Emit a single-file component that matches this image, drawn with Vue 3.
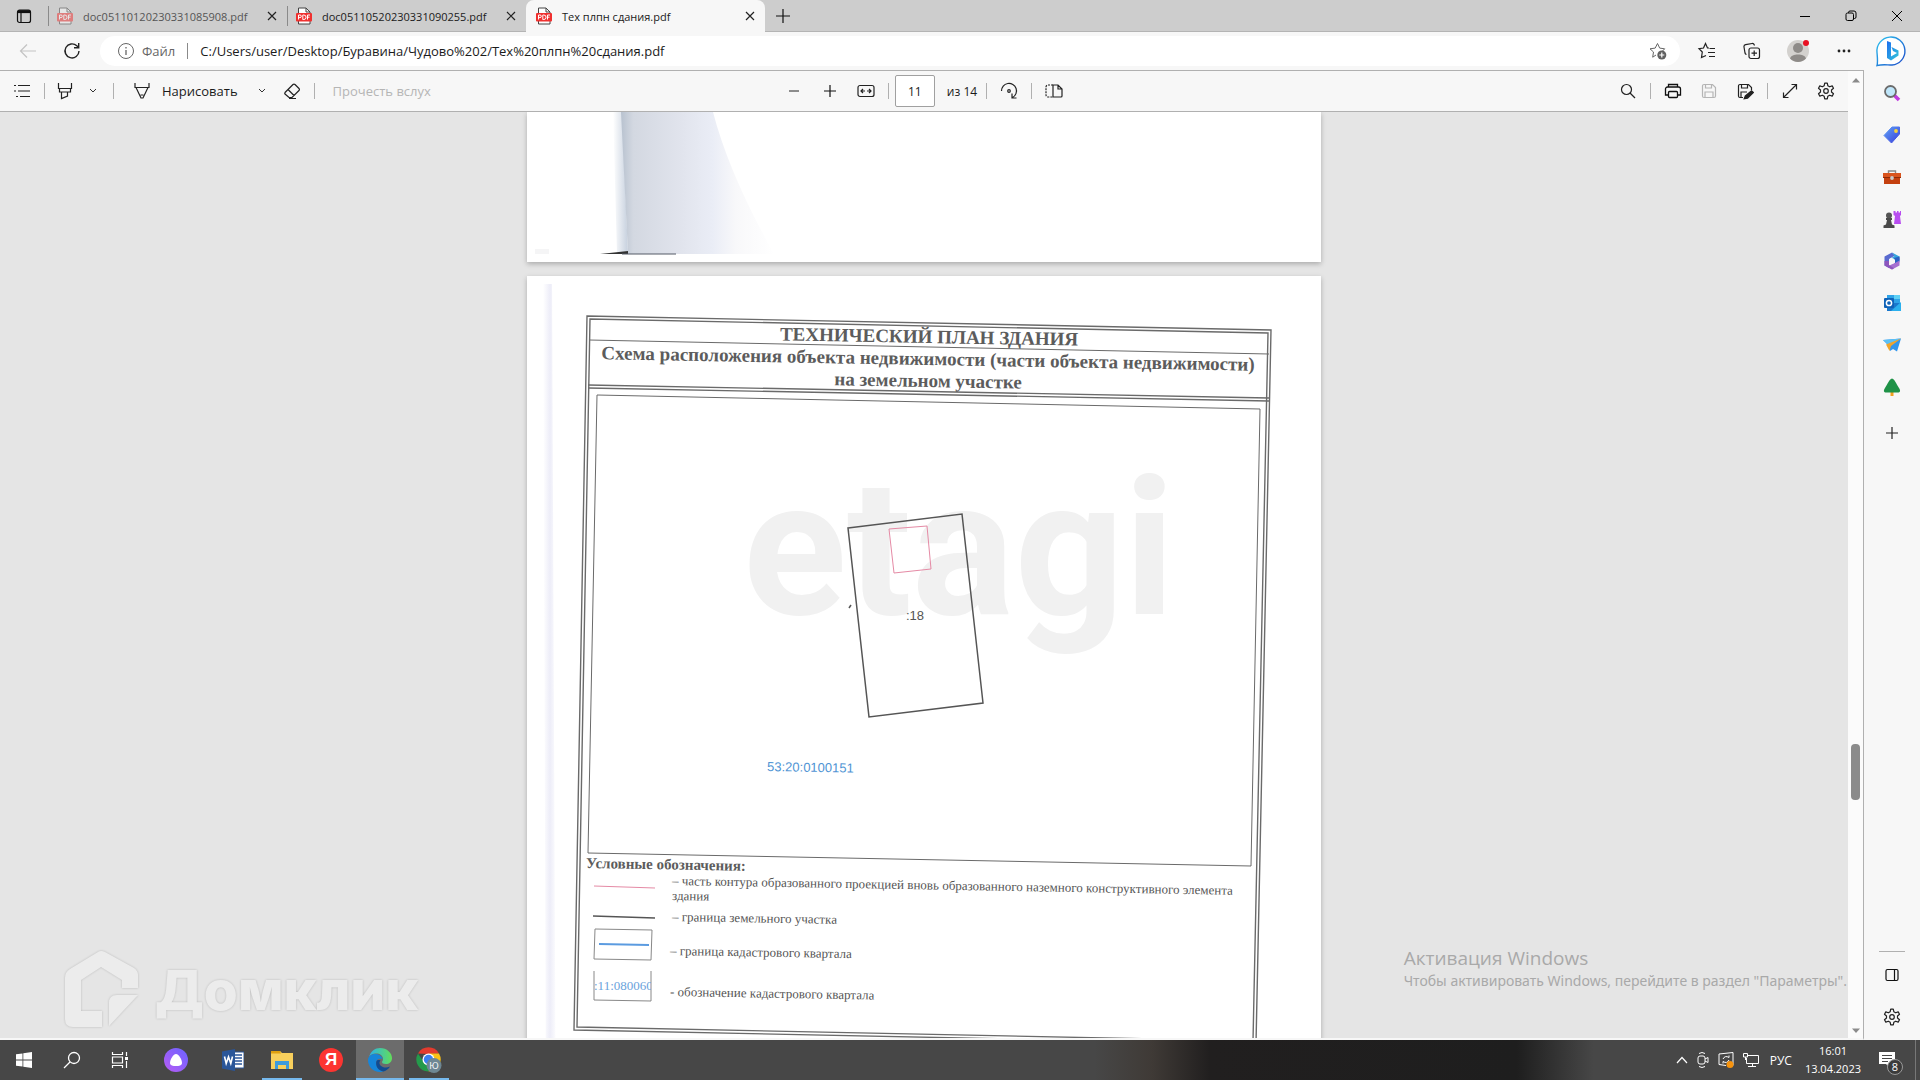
<template>
  <div class="desktop">
    <!-- tab strip -->
    <header class="tab-strip">
      <button class="tab-actions" aria-label="Меню действий вкладок">
        <svg width="16" height="16" viewBox="0 0 16 16" fill="none" stroke="#111">
          <rect x="1.5" y="2" width="13" height="12.5" rx="2" stroke-width="1.2" />
          <path d="M2 3.6h12" stroke-width="3" />
          <path d="M5 4v10" stroke-width="1.2" />
        </svg>
      </button>
      <div
        v-for="tab in tabs"
        :key="tab.title"
        class="tab"
        :class="{ active: tab.active, faded: tab.faded }"
      >
        <svg class="pdf-icon" width="16" height="18" viewBox="0 0 16 18">
          <path d="M2.5 1h7.5l4 4v12H2.500z" fill="#fff" stroke="#444" />
          <path d="M10 1v4h4" fill="none" stroke="#444" />
          <rect x="0" y="6" width="16" height="8.500" rx="1" fill="#f0302f" />
          <path
            d="M2.500 12.500v-4.500h1.500a1.300 1.300 0 0 1 0 2.600H2.500M6.800 8v4.500h1a2.200 2.200 0 0 0 0-4.500zM11.500 12.500V8H14M11.500 10.200h2"
            fill="none" stroke="#fff"
          />
        </svg>
        <span class="tab-title">{{ tab.title }}</span>
        <button class="tab-close" aria-label="Закрыть вкладку">
          <svg width="10" height="10" viewBox="0 0 10 10" stroke="#222" stroke-width="1.2"><path d="M1 1l8 8M9 1l-8 8" /></svg>
        </button>
      </div>
      <button class="new-tab" aria-label="Новая вкладка">
        <svg width="14" height="14" viewBox="0 0 14 14" stroke="#111" stroke-width="1.2"><path d="M7 0v14M0 7h14" /></svg>
      </button>
      <div class="window-controls">
        <button aria-label="Свернуть">
          <svg width="12" height="12" viewBox="0 0 12 12" stroke="#000"><path d="M1 6.500h10" /></svg>
        </button>
        <button aria-label="Восстановить">
          <svg width="12" height="12" viewBox="0 0 12 12" fill="none" stroke="#000">
            <rect x="1" y="3" width="7.500" height="7.500" rx="1.500" />
            <path d="M3.500 3V2.500A1.500 1.500 0 0 1 5 1h4a2 2 0 0 1 2 2v4a1.500 1.500 0 0 1-1.500 1.500H9" />
          </svg>
        </button>
        <button aria-label="Закрыть">
          <svg width="12" height="12" viewBox="0 0 12 12" stroke="#000"><path d="M1 1l10 10M11 1L1 11" /></svg>
        </button>
      </div>
    </header>

    <!-- address row -->
    <div class="address-row">
      <button class="nav-btn" disabled aria-label="Назад">
        <svg width="18" height="16" viewBox="0 0 18 16" fill="none" stroke="#c3c3c3" stroke-width="1.2"><path d="M17 8H2M8 1.500L1.500 8 8 14.500" /></svg>
      </button>
      <button class="nav-btn" aria-label="Обновить">
        <svg width="18" height="18" viewBox="0 0 18 18" fill="none" stroke="#222" stroke-width="1.4">
          <path d="M16 9a7 7 0 1 1-2.200-5.200L15.500 5.500" />
          <path d="M15.700 1v4.700H11" />
        </svg>
      </button>
      <div class="address-bar">
        <svg width="18" height="18" viewBox="0 0 18 18" fill="none" stroke="#666">
          <circle cx="9" cy="9" r="7.500" />
          <path d="M9 8v5M9 5v1.500" stroke-width="1.300" />
        </svg>
        <span class="scheme">Файл</span>
        <input class="url" type="text" aria-label="Адресная строка" :value="url" />
        <button class="add-favorite" aria-label="Добавить в избранное">
          <svg width="18" height="18" viewBox="0 0 18 18" fill="none" stroke="#666">
            <path d="M8.500 1.500l2.200 4.600 5 .7-2.500 2.500M7 13l-3.300 2.200.8-5.200L1 6.800l5.200-.7 2.300-4.600" />
            <circle cx="12.800" cy="13" r="4.500" fill="#616161" stroke="none" />
            <path d="M12.800 10.500v5M10.300 13h5" stroke="#fff" stroke-width="1.200" />
          </svg>
        </button>
      </div>
      <div class="browser-actions">
        <button aria-label="Избранное">
          <svg width="18" height="18" viewBox="-1 0 18 18" fill="none" stroke="#222" stroke-width="1.200">
            <path d="M11 6H9.500L7.500 1.500 5.500 6l-4.500.7 3.300 3.300-.8 5.500L8 13.500M11.500 6.500H17M10 10.500h7M11 14.500h6" />
          </svg>
        </button>
        <button aria-label="Коллекции">
          <svg width="18" height="18" viewBox="0 0 18 18" fill="none" stroke="#222" stroke-width="1.200">
            <rect x="6" y="6" width="10.500" height="10.500" rx="2" />
            <path d="M11.200 8.500v5.500M8.500 11.200h5.500M3.500 12.500A2 2 0 0 1 2 11L1 5a2 2 0 0 1 1.600-2.300l6.500-1.200A2 2 0 0 1 11.400 3.500" />
          </svg>
        </button>
        <button aria-label="Профиль">
          <svg width="26" height="26" viewBox="0 0 26 26">
            <circle cx="13" cy="13" r="11" fill="#d3d1ce" />
            <circle cx="13" cy="10" r="5" fill="#8e8b88" />
            <path d="M5 20.500C6 17.500 9 16.500 13 16.500s7 1 8 4A11 11 0 0 1 5 20.500z" fill="#8e8b88" />
            <circle cx="21" cy="5" r="3" fill="#e81123" />
          </svg>
        </button>
        <button aria-label="Настройки и прочее">
          <svg width="14" height="4" viewBox="0 0 14 4" fill="#222"><circle cx="2" cy="2" r="1.400" /><circle cx="7" cy="2" r="1.400" /><circle cx="12" cy="2" r="1.400" /></svg>
        </button>
        <button aria-label="Bing">
          <svg width="34" height="32" viewBox="-2 0 34 32">
            <defs>
              <linearGradient id="bing-ring" x1="0" y1="0" x2="1" y2="1"><stop offset="0" stop-color="#2cc4f0" /><stop offset="1" stop-color="#1b49c8" /></linearGradient>
              <linearGradient id="bing-b" x1="0" y1="0" x2="1" y2="1"><stop offset="0" stop-color="#1b6df0" /><stop offset="1" stop-color="#35c8d8" /></linearGradient>
            </defs>
            <path d="M2 30.500c1-3 .5-7 0-13A14 14 0 1 1 17 30c-5 0-9-1-15 .5z" fill="#fff" stroke="url(#bing-ring)" stroke-width="1.400" />
            <path d="M12 6l4 1.500v14L22 18l-4-2-1.500-4 7 3.500v5L16 25.500 12 23z" fill="url(#bing-b)" />
          </svg>
        </button>
      </div>
    </div>

    <div class="content">
      <main class="viewer">
        <div class="viewer-main">
          <!-- pdf toolbar -->
          <div class="pdf-toolbar">
            <div class="group">
              <button class="tool" aria-label="Содержание">
                <svg width="18" height="16" viewBox="0 0 18 16" stroke="#222" stroke-width="1.200"><path d="M5 2.500h12M5 8h12M7 13.500h10M1 2.500h2M1 8h2M3 13.500h2" /></svg>
              </button>
              <span class="sep"></span>
              <button class="tool narrow" aria-label="Выделить">
                <svg width="16" height="18" viewBox="0 0 16 18" fill="none" stroke="#222" stroke-width="1.200"><path d="M1.500 1v5.500h13V1M2.500 6.500v3.500h11V6.500M4.500 10v6.500l6-2.500v-4" /></svg>
              </button>
              <button class="tool chevron first" aria-label="Цвет выделения">
                <svg width="8" height="6" viewBox="0 0 8 6" fill="none" stroke="#333"><path d="M1 1l3 3 3-3" /></svg>
              </button>
              <span class="sep"></span>
              <button class="draw">
                <svg width="16" height="18" viewBox="0 0 16 18" fill="none" stroke="#222" stroke-width="1.200"><path d="M1 1v4.500h14V1M2 5.500l5 10.500h2l5-10.500M6.500 13h3" /></svg>
                Нарисовать
              </button>
              <button class="tool chevron" aria-label="Параметры рукописного ввода">
                <svg width="8" height="6" viewBox="0 0 8 6" fill="none" stroke="#333"><path d="M1 1l3 3 3-3" /></svg>
              </button>
              <button class="tool" aria-label="Стереть">
                <svg width="18" height="18" viewBox="0 0 18 18" fill="none" stroke="#222" stroke-width="1.200"><path d="M2 10.500l8-8a1.400 1.400 0 0 1 2 0l4 4a1.400 1.400 0 0 1 0 2l-7 7H6l-4-3.500a1.200 1.200 0 0 1 0-1.500zM5 7.500l6 6M6 16.500h7" /></svg>
              </button>
              <span class="sep"></span>
              <button class="read-aloud" disabled>Прочесть вслух</button>
            </div>
            <div class="group">
              <button class="tool" aria-label="Уменьшить">
                <svg width="12" height="12" viewBox="0 0 12 12" stroke="#222"><path d="M1 6h10" /></svg>
              </button>
              <button class="tool" aria-label="Увеличить">
                <svg width="12" height="12" viewBox="0 0 12 12" stroke="#111" stroke-width="1.200"><path d="M6 0v12M0 6h12" /></svg>
              </button>
              <button class="tool" aria-label="По ширине">
                <svg width="18" height="14" viewBox="0 0 18 14" fill="none" stroke="#222" stroke-width="1.200"><rect x="1" y="1.500" width="16" height="11" rx="2" /><path d="M4 7h4M10 7h4M6 5L4 7l2 2M12 5l2 2-2 2" /></svg>
              </button>
              <span class="sep"></span>
              <input class="page-input" type="text" aria-label="Номер страницы" v-model="page" />
              <span class="page-total">из 14</span>
              <span class="sep"></span>
              <button class="tool" aria-label="Повернуть">
                <svg width="18" height="18" viewBox="0 0 18 18" fill="none" stroke="#222" stroke-width="1.200"><path d="M1.500 9a7.500 7.500 0 1 1 11 6.500M12 11.500v4.500h4.500" /><circle cx="9" cy="9" r="1.300" /></svg>
              </button>
              <span class="sep"></span>
              <button class="tool" aria-label="Представление страницы">
                <svg width="18" height="16" viewBox="0 0 18 16" fill="none" stroke="#222" stroke-width="1.200"><path d="M8 2h5l4 4v7a1 1 0 0 1-1 1H8zM13 2v4h4" /><path d="M8 2H3a2 2 0 0 0-2 2v8a2 2 0 0 0 2 2h5" stroke-dasharray="2 1" /></svg>
              </button>
            </div>
            <div class="group end">
              <button class="tool" aria-label="Найти">
                <svg width="16" height="16" viewBox="0 0 16 16" fill="none" stroke="#222" stroke-width="1.200"><circle cx="6.500" cy="6.500" r="5" /><path d="M10 10l5 5" /></svg>
              </button>
              <span class="sep"></span>
              <button class="tool" aria-label="Печать">
                <svg width="18" height="16" viewBox="0 0 18 16" fill="none" stroke="#111" stroke-width="1.300"><path d="M4.500 4V1.500h9V4M4.500 12H1.500V6a2 2 0 0 1 2-2h11a2 2 0 0 1 2 2v6h-3" /><rect x="4.500" y="8.500" width="9" height="6" rx="1" /></svg>
              </button>
              <button class="tool" disabled aria-label="Сохранить">
                <svg width="16" height="16" viewBox="0 0 16 16" fill="none" stroke="#b5b5b5" stroke-width="1.200"><path d="M3 1.500h8.500l3 3V13a1.500 1.500 0 0 1-1.500 1.500H3A1.500 1.500 0 0 1 1.500 13V3A1.500 1.500 0 0 1 3 1.500zM4.500 1.500V5h6V1.500M4 14.500V9h8v5.500" /></svg>
              </button>
              <button class="tool" aria-label="Сохранить как">
                <svg width="17" height="17" viewBox="0 0 17 17" fill="none" stroke="#222" stroke-width="1.200"><path d="M6 14.500H3A1.500 1.500 0 0 1 1.500 13V3A1.500 1.500 0 0 1 3 1.500h8.500l3 3V7M4.500 1.500V5h6V1.500M4 14.500V9h6" /><path d="M7.500 15.500l1-2.500 6-5 1.500 1.500-5.500 5.500z" fill="#222" stroke-width="1.600" /></svg>
              </button>
              <span class="sep"></span>
              <button class="tool" aria-label="Во весь экран">
                <svg width="16" height="16" viewBox="0 0 16 16" fill="none" stroke="#222" stroke-width="1.200"><path d="M1.500 14.500l13-13M9.500 1.500h5v5M1.500 9.500v5h5" /></svg>
              </button>
              <button class="tool" aria-label="Параметры">
                <svg width="18" height="18" viewBox="0 0 18 18" fill="none" stroke="#222" stroke-width="1.200"><path :d="gearPath" stroke-linejoin="round" /><circle cx="9" cy="9" r="2.300" /></svg>
              </button>
            </div>
          </div>

          <!-- pages -->
          <div class="pages">
            <section class="sheet previous">
              <svg width="100%" viewBox="0 0 794 150" role="img" aria-label="Страница 10">
                <defs>
                  <linearGradient id="fold" x1="0" x2="1">
                    <stop offset="0" stop-color="#b8c2cf" />
                    <stop offset="0.08" stop-color="#d3d8e1" />
                    <stop offset="0.35" stop-color="#dfe2eb" />
                    <stop offset="0.6" stop-color="#eaedf6" />
                    <stop offset="0.75" stop-color="#f8f8fa" />
                    <stop offset="1" stop-color="#fff" />
                  </linearGradient>
                  <linearGradient id="fold-edge" x1="0" x2="1">
                    <stop offset="0" stop-color="#fff" />
                    <stop offset="1" stop-color="#c6d0de" />
                  </linearGradient>
                </defs>
                <path d="M86 0h9l6 142H90z" fill="url(#fold-edge)" />
                <path d="M94 0h92q16 62 61 142H101z" fill="url(#fold)" />
                <path d="M73 142l28-3v3z" fill="#333" />
                <path d="M95 142h54" stroke="#555b66" />
                <path d="M8 137h14v5H8z" fill="#f5f5f6" />
              </svg>
            </section>

            <section class="sheet current">
              <svg width="100%" viewBox="0 0 794 1122" role="img" aria-label="Страница 11">
                <defs>
                  <clipPath id="quarter-label"><path d="M68 694h56v31H68z" /></clipPath>
                  <linearGradient id="scan-edge" x1="0" x2="1">
                    <stop offset="0" stop-color="#fff" />
                    <stop offset="0.5" stop-color="#ededf8" />
                    <stop offset="1" stop-color="#fff" />
                  </linearGradient>
                </defs>
                <path d="M16 8h9l5 1100H20z" fill="url(#scan-edge)" />

                <text class="watermark" x="216" y="338">etagi</text>

                <!-- frame -->
                <g class="frame">
                  <path d="M60 40L744 54 729 768 47 754z" />
                  <path d="M63 43L741 57 726 765 50 751z" />
                  <path d="M61 109L742 122M61 112L742 125" />
                  <path class="thin" d="M62 64L742 78M70 119L733 133 724 590 61 577z" />
                </g>
                <g class="heading">
                  <text x="402" y="67" transform="rotate(1 402 67)">ТЕХНИЧЕСКИЙ ПЛАН ЗДАНИЯ</text>
                  <text x="401" y="89" transform="rotate(1 401 89)">Схема расположения объекта недвижимости (части объекта недвижимости)</text>
                  <text x="401" y="111" transform="rotate(1 401 111)">на земельном участке</text>
                </g>

                <!-- plot -->
                <path class="plot" d="M321 252L435 238 456 427 342 441z" />
                <path class="building" d="M362 253L400 250 404 293 367 297z" />
                <path class="plot" d="M322 332l2-3" />
                <text class="plot-number" x="379" y="344">:18</text>
                <text class="quarter-number" x="240" y="495" transform="rotate(1 240 495)">53:20:0100151</text>

                <!-- legend -->
                <text class="legend-title" x="59" y="592" transform="rotate(1 59 592)">Условные обозначения:</text>
                <path class="building" d="M67 610L128 612" />
                <path class="plot" d="M66 640L128 642" />
                <path class="box" d="M68 653L125 654 124 684 67 683z" />
                <path class="quarter" d="M72 668L122 669" />
                <path class="box" d="M67 695V724L124 725V695" />
                <text class="quarter-sample" x="67" y="714" clip-path="url(#quarter-label)">:11:080060</text>
                <text
                  v-for="item in legend"
                  :key="item.text"
                  class="legend-text"
                  :x="item.x"
                  :y="item.y"
                  :transform="`rotate(1 ${item.x} ${item.y})`"
                >{{ item.text }}</text>
              </svg>
            </section>
          </div>

          <div class="domclick">
            <svg width="74" height="77" viewBox="0 0 74 77" fill="#ececec">
              <path d="M33 1L5 18Q0 21 0 27V68Q0 76 8 76H37V60H16V29L36 16 57 29V37H73V24Q73 20 69 17L40 1Q36 -1 33 1Z" />
              <path d="M44 75V52Q44 44 52 44H73Z" />
            </svg>
            <span>Домклик</span>
          </div>

          <div class="activation">
            <p class="activation-title">Активация Windows</p>
            <p class="activation-text">Чтобы активировать Windows, перейдите в раздел "Параметры".</p>
          </div>
        </div>

        <div class="scrollbar">
          <svg width="10" height="6" viewBox="0 0 10 6" fill="#8b8b8b"><path d="M1 5.500L5 1l4 4.500z" /></svg>
          <div class="track"><div class="thumb"></div></div>
          <svg width="10" height="6" viewBox="0 0 10 6" fill="#8b8b8b"><path d="M1 .5L5 5 9 .5z" /></svg>
        </div>
      </main>

      <!-- sidebar -->
      <aside class="sidebar">
        <button aria-label="Поиск">
          <svg width="18" height="18" viewBox="0 0 18 18"><path d="M11.500 11.500l4.500 4.500" stroke="#c03be0" stroke-width="3.500" /><circle cx="7.500" cy="7.500" r="5.500" fill="#bfe6fa" stroke="#6b6b6b" stroke-width="1.800" /></svg>
        </button>
        <button aria-label="Покупки">
          <svg width="18" height="18" viewBox="0 0 18 18"><defs><linearGradient id="tag" x1="0" y1="0" x2="1" y2="1"><stop offset="0" stop-color="#5ea3f5" /><stop offset="1" stop-color="#3c3fdc" /></linearGradient></defs><path d="M9 1h7.500v7L8.500 17 1 9.500z" fill="url(#tag)" stroke="url(#tag)" stroke-linejoin="round" /><circle cx="13" cy="5" r="1.900" fill="#f6d33c" /></svg>
        </button>
        <button aria-label="Инструменты">
          <svg width="18" height="16" viewBox="0 0 18 16"><path d="M5.500 4.500V2h7v2.500" fill="none" stroke="#888" stroke-width="1.400" /><path d="M0 4h18v5H0z" fill="#d9541e" /><path d="M1 9h16v6H1z" fill="#c4400f" /><path d="M0 8.500h18" stroke="#8e2a08" /><circle cx="9" cy="9" r="1.900" fill="#c9c9c9" /></svg>
        </button>
        <button aria-label="Игры">
          <svg width="18" height="18" viewBox="0 0 18 18"><path d="M10.500 1h2v1.500h1.500V1h1.500v1.500H17V1h1v4l-1 1 1 8h-7l1-8-1.500-1z" fill="#b84df0" /><circle cx="6" cy="5.500" r="3" fill="#555" /><path d="M3 8h6v2H8l1 4.500 2.500 1V18H.5v-2.500l2.500-1L4 10H3z" fill="#4a4a4a" /></svg>
        </button>
        <button aria-label="Microsoft 365">
          <svg width="18" height="18" viewBox="0 0 18 18"><path d="M9 .5L1.500 4.500v9L6 16V7l6-3.500z" fill="#5a6bd0" /><path d="M9 .5l7.500 4v6L12 8 8.500 6l3-2z" fill="#36a5dc" /><path d="M16.500 6v7.500L9 17.500l-5-2.700 8-4V8.500z" fill="#a66fd0" /><path d="M16.500 4.500v4L12 11V8l-1-2z" fill="#2a62c4" /><path d="M1.500 9v4.500L9 17.500l2-1.200L6 13V9z" fill="#8e56bd" /><circle cx="9" cy="9" r="2.800" fill="#f7f7f7" /></svg>
        </button>
        <button aria-label="Outlook">
          <svg width="18" height="18" viewBox="0 0 18 18"><path d="M4 1h13v8H4z" fill="#2fa3e8" /><path d="M11 1h6v4h-6z" fill="#5fd0f5" /><path d="M4 9h14v8H4z" fill="#1a78cc" /><path d="M18 8v9H8z" fill="#2bb0ee" /><rect x="1" y="4" width="10" height="10" rx="1" fill="#0f62b8" /><circle cx="6" cy="9" r="2.600" fill="none" stroke="#fff" stroke-width="1.500" /></svg>
        </button>
        <button aria-label="Drop">
          <svg width="18" height="16" viewBox="0 0 18 16"><path d="M0 3l18-1.500L14 14.500 10 12l-3 2-1-5z" fill="#3196ee" /><path d="M0 3l18-1.500L5 7.500z" fill="#5cc1f6" /><path d="M3 7.500L18 1.500 8 9l-1.500 5z" fill="#f0a52c" /></svg>
        </button>
        <button aria-label="E-tree">
          <svg width="18" height="18" viewBox="0 0 18 18"><path d="M7.500 13h3v5h-3z" fill="#f0a020" /><path d="M9 .5c3 1 4 5 7 9.500 2 3 1 4.500-1 4.500H3c-2 0-3-1.500-1-4.500C5 5.500 6 1.500 9 .5z" fill="#1f9247" /></svg>
        </button>
        <button class="add" aria-label="Настроить">
          <svg width="12" height="12" viewBox="0 0 12 12" stroke="#222" stroke-width="1.200"><path d="M6 0v12M0 6h12" /></svg>
        </button>
        <div class="sidebar-bottom">
          <button aria-label="Скрыть боковую панель">
            <svg width="14" height="14" viewBox="0 0 14 14" fill="none" stroke="#111" stroke-width="1.200"><rect x="1" y="1.500" width="12" height="11" rx="1.500" /><path d="M9.500 1.500v11" /></svg>
          </button>
          <button aria-label="Настройки">
            <svg width="18" height="18" viewBox="0 0 18 18" fill="none" stroke="#222" stroke-width="1.200"><path :d="gearPath" stroke-linejoin="round" /><circle cx="9" cy="9" r="2.300" /></svg>
          </button>
        </div>
      </aside>
    </div>

    <!-- taskbar -->
    <footer class="taskbar">
      <button aria-label="Пуск">
        <svg width="16" height="16" viewBox="0 0 16 16" fill="#fff"><path d="M0 2.300L6.500 1.400v6.200H0zM7.300 1.300L16 0v7.600H7.300zM0 8.400h6.500v6.200L0 13.700zM7.300 8.400H16V16l-8.700-1.300z" /></svg>
      </button>
      <button aria-label="Поиск">
        <svg width="18" height="18" viewBox="0 0 18 18" fill="none" stroke="#fff" stroke-width="1.300"><circle cx="11" cy="7" r="5.500" /><path d="M7 11l-6 6" /></svg>
      </button>
      <button aria-label="Представление задач">
        <svg width="18" height="16" viewBox="0 0 18 16" fill="none" stroke="#fff" stroke-width="1.200"><path d="M1.500 0v2.500h10V0M1.500 16v-2.500h10V16M1.500 5h10v6h-10zM15.500 0v4M15.500 9v7" /><path d="M14 5h3v3h-3z" fill="#fff" stroke="none" /></svg>
      </button>
      <div class="apps">
        <button class="alice" aria-label="Алиса">
          <svg width="24" height="24" viewBox="0 0 24 24"><defs><linearGradient id="alice" x1="1" y1="0" x2="0" y2="1"><stop offset="0" stop-color="#6a63ff" /><stop offset="1" stop-color="#b85cf5" /></linearGradient></defs><circle cx="12" cy="12" r="12" fill="url(#alice)" /><path d="M12 6c3 0 6 6 6 9 0 2.500-3 3-6 3s-6-.5-6-3c0-3 3-9 6-9z" fill="#fff" /></svg>
        </button>
        <button aria-label="Word">
          <svg width="22" height="22" viewBox="0 0 22 22"><path d="M12 3h10v16H12z" fill="#fff" stroke="#2a569a" /><path d="M13 6h7M13 9h7M13 12h7M13 15h7" stroke="#2a569a" stroke-width="1.300" /><path d="M0 2.500L13 0v22L0 19.500z" fill="#2a5699" /><path d="M2.500 7.500l1.700 7 2.300-6.500 2.300 6.500 1.700-7" fill="none" stroke="#fff" stroke-width="1.600" /></svg>
        </button>
        <button class="running" aria-label="Проводник">
          <svg width="22" height="20" viewBox="0 0 22 20"><path d="M0 1h9l2 2h11v16H0z" fill="#f8cf5c" /><path d="M0 1h9l1 2.500H0z" fill="#e0a010" /><path d="M4 19v-8h14v8h-3v-4H7v4z" fill="#3e9bdc" /></svg>
        </button>
        <button aria-label="Яндекс">
          <span class="yandex">Я</span>
        </button>
        <button class="running focused" aria-label="Microsoft Edge">
          <svg width="24" height="24" viewBox="0 0 24 24">
            <defs><linearGradient id="edge-top" x1="0" x2="1"><stop offset="0" stop-color="#2bb1e8" /><stop offset="1" stop-color="#62de5a" /></linearGradient></defs>
            <path d="M1 9C3 3 7 0 12 0c7 0 12 5 12 10 0 4-3 6-6 6-3 0-4-1-4-2 0-1 1-1 1-3C15 7 11 5 7 5.500 4 6 2 7 1 9z" fill="url(#edge-top)" />
            <path d="M0 12c0-4 4-6.500 8-6 4 .5 6.500 3 6.500 5-1-1-5-1-6 2-1.500 5 3 10 7 10.300-1 .5-2 .7-3.500.7C5 24 0 18.500 0 12z" fill="#1685d9" />
            <path d="M8.500 13c-1.500 5 2 10 7 10.400 3-1 5-2.500 6.500-5-5 2.500-10 0-10.500-3-.3-1.500.5-2.500 1-3-2-.6-3.500-.4-4 .6z" fill="#114b91" />
          </svg>
        </button>
        <button class="running" aria-label="Google Chrome">
          <svg width="26" height="26" viewBox="0 0 26 26">
            <path d="M2 6.500A12 12 0 0 1 23 6.500L12 7z" fill="#e33b2e" />
            <path d="M23 6.500A12 12 0 0 1 12.500 24.500L17 12l-4-5.500z" fill="#fbc116" />
            <path d="M2 6.500A12 12 0 0 0 12.500 24.500L16 15 7 14z" fill="#249a4b" />
            <circle cx="12.500" cy="12.500" r="6" fill="#fff" /><circle cx="12.500" cy="12.500" r="4.700" fill="#3c7ff0" />
            <circle cx="18" cy="18.500" r="7.500" fill="#6e8794" />
            <text x="18" y="22" text-anchor="middle" class="chrome-profile">Ю</text>
          </svg>
        </button>
      </div>

      <div class="tray">
        <svg width="12" height="8" viewBox="0 0 12 8" fill="none" stroke="#fff" stroke-width="1.200"><path d="M1 7l5-5.500L11 7" /></svg>
        <svg width="12" height="18" viewBox="0 0 12 18" fill="none" stroke="#fff"><rect x="1" y="5" width="7" height="8" rx="2" /><path d="M8 8l3-1.500v5L8 10M2 2.500q3-2 6 0M2 15.500q3 2 6 0" /></svg>
        <svg width="16" height="18" viewBox="0 0 16 18" fill="none" stroke="#fff"><path d="M1 3l14-1.500v13M8 14.500L1 13.500V3M5 8q2-4 6-1.500V4.500M11 9q-2 4-6 1.500v2" /><circle cx="12" cy="13.500" r="3.500" fill="#f7930d" stroke="none" /></svg>
        <svg width="16" height="16" viewBox="0 0 16 16" fill="none" stroke="#fff"><path d="M5 3.500h10.500v8H3.500V6M9.500 11.500v3M5 14.500h8M.5 1.500h4V5h-4zM2.500 5v3" /></svg>
        <span class="lang">РУС</span>
        <div class="clock">
          <span>16:01</span>
          <span>13.04.2023</span>
        </div>
        <button class="notifications" aria-label="Уведомления">
          <svg width="16" height="18" viewBox="0 0 16 18"><path d="M0 1h16v12h-5v4l-4-4H0z" fill="#fff" /><path d="M3 4.500h10M3 7.500h10M3 10.500h6" stroke="#474747" /></svg>
          <span class="badge">8</span>
        </button>
      </div>
    </footer>
  </div>
</template>

<script setup>
import { ref } from 'vue'

const url = 'C:/Users/user/Desktop/Буравина/Чудово%202/Тех%20плпн%20сдания.pdf'
const page = ref('11')

const tabs = [
  { title: 'doc05110120230331085908.pdf', active: false, faded: true },
  { title: 'doc05110520230331090255.pdf', active: false, faded: false },
  { title: 'Тех плпн сдания.pdf', active: true, faded: false }
]

const legend = [
  { text: '– часть контура образованного проекцией вновь образованного наземного конструктивного элемента', x: 145, y: 609 },
  { text: 'здания', x: 145, y: 624 },
  { text: '– граница земельного участка', x: 145, y: 645 },
  { text: '– граница кадастрового квартала', x: 143, y: 679 },
  { text: '- обозначение кадастрового квартала', x: 143, y: 720 }
]

const gearPath = buildGear(9, 8, 5.6, 6)

// шестерёнка: зубцы чередуются с впадинами
function buildGear(center, outer, inner, teeth) {
  const points = []
  const step = (Math.PI * 2) / teeth
  for (let i = 0; i < teeth; i++) {
    const a = i * step - Math.PI / 2
    const corners = [
      [outer, a - step * 0.16],
      [outer, a + step * 0.16],
      [inner, a + step * 0.32],
      [inner, a + step * 0.68]
    ]
    for (const [r, t] of corners) {
      points.push(`${(center + r * Math.cos(t)).toFixed(1)} ${(center + r * Math.sin(t)).toFixed(1)}`)
    }
  }
  return 'M' + points.join('L') + 'Z'
}
</script>

<style>
body {
  margin: 0;
}
</style>

<style scoped>
.desktop {
  display: flex;
  flex-direction: column;
  height: 100vh;
  overflow: hidden;
  background: #f7f7f7;
  font-family: "Open Sans", "Noto Sans", sans-serif;
  font-size: 12px;
  color: #1b1b1b;
}

button {
  display: flex;
  align-items: center;
  justify-content: center;
  flex-shrink: 0;
  padding: 0;
  border: 0;
  background: none;
  font: inherit;
  color: inherit;
}

input {
  border: 0;
  padding: 0;
  font: inherit;
  color: inherit;
  background: none;
}

svg {
  flex-shrink: 0;
}

/* tabs */
.tab-strip {
  display: flex;
  height: 32px;
  background: #cdcdcd;
  box-shadow: inset 0 -1px #b4b4b4;
}

.tab-actions {
  width: 48px;
}

.tab {
  display: flex;
  align-items: center;
  box-sizing: border-box;
  width: 239px;
  padding: 0 8px;
  border-left: 1px solid #8a8a8a;
  border-image: linear-gradient(transparent 20%, #8a8a8a 20%, #8a8a8a 80%, transparent 80%) 1;
}

.tab.active {
  background: #f7f7f7;
  border: 0;
  border-radius: 8px 8px 0 0;
  padding-left: 10px;
}

.tab.faded .pdf-icon {
  opacity: 0.5;
}

.tab.faded .tab-title {
  color: #555;
}

.tab-title {
  flex: 1;
  margin-left: 10px;
  white-space: nowrap;
  font-size: 11px;
}

.tab-close {
  width: 14px;
  height: 20px;
}

.new-tab {
  width: 36px;
}

.window-controls {
  display: flex;
  margin-left: auto;
}

.window-controls button {
  width: 46px;
}

/* address row */
.address-row {
  display: flex;
  align-items: center;
  height: 38px;
  padding: 0 7px 0 10px;
}

.nav-btn {
  width: 36px;
  height: 32px;
}

.nav-btn + .nav-btn {
  margin-left: 8px;
}

.address-bar {
  display: flex;
  align-items: center;
  flex: 1;
  height: 30px;
  margin: 0 3px 0 10px;
  padding: 0 13px 0 17px;
  border-radius: 15px;
  background: #fff;
}

.scheme {
  margin-left: 7px;
  padding-right: 12px;
  border-right: 1px solid #8a8a8a;
  font-size: 13px;
  line-height: 16px;
  color: #666;
}

.url {
  flex: 1;
  margin-left: 12px;
  font-size: 13px;
}

.browser-actions {
  display: flex;
}

.browser-actions button {
  width: 46px;
}

/* viewer */
.content {
  display: flex;
  flex: 1;
  min-height: 0;
}

.viewer {
  display: flex;
  flex: 1;
  border: solid #b0b0b0;
  border-width: 1px 1px 0 0;
  border-bottom: 2px solid #f7f7f7;
}

.viewer-main {
  position: relative;
  display: flex;
  flex-direction: column;
  flex: 1;
}

.pdf-toolbar {
  display: grid;
  grid-template-columns: 1fr auto 1fr;
  height: 40px;
  border-bottom: 1px solid #b0b0b0;
  background: #f7f7f7;
  font-size: 13px;
}

.group {
  display: flex;
  align-items: center;
  padding: 0 4px;
}

.group.end {
  justify-content: flex-end;
}

.tool {
  width: 36px;
  height: 32px;
}

.tool.narrow {
  width: 32px;
}

.tool.chevron {
  width: 24px;
}

.tool.first {
  margin-right: 4px;
}

.sep {
  width: 1px;
  height: 16px;
  margin: 0 4px;
  background: #b0b0b0;
}

.draw {
  gap: 12px;
  padding: 0 12px 0 16px;
}

.read-aloud {
  margin-left: 14px;
  color: #b5b5b5;
}

.page-input {
  box-sizing: border-box;
  width: 40px;
  height: 32px;
  margin: 0 12px 0 2px;
  border: 1px solid #a0a0a0;
  border-radius: 2px;
  background: #fff;
  text-align: center;
  font-size: 12px;
}

.page-total {
  margin-right: 5px;
  font-size: 12px;
}

.pages {
  display: flex;
  flex-direction: column;
  align-items: center;
  flex: 1;
  gap: 14px;
  min-height: 0;
  overflow: hidden;
  background: #e5e5e5;
}

.sheet {
  flex-shrink: 0;
  width: 43%;
  max-width: 794px;
  background: #fff;
  box-shadow: 0 2px 5px #00000040;
}

.sheet svg {
  display: block;
}

.frame path {
  fill: none;
  stroke: #6a6a6a;
  stroke-width: 1.4;
}

.frame .thin {
  stroke-width: 1;
}

.heading text {
  font: bold 19px "Liberation Serif", serif;
  text-anchor: middle;
  fill: #5c5c5c;
}

.watermark {
  font: bold 192px Roboto, sans-serif;
  fill: #f1f1f1;
}

.plot {
  fill: none;
  stroke: #555;
  stroke-width: 1.5;
}

.building {
  fill: none;
  stroke: #e58aa5;
}

.box {
  fill: none;
  stroke: #888;
}

.quarter {
  stroke: #5b9be0;
  stroke-width: 2;
}

.plot-number {
  font: 13px "Liberation Sans", sans-serif;
  fill: #555;
}

.quarter-number {
  font: 13px "Liberation Sans", sans-serif;
  fill: #4f94d4;
}

.quarter-sample {
  font: 13px "Liberation Serif", serif;
  fill: #6aa3dc;
}

.legend-title {
  font: bold 15px "Liberation Serif", serif;
  fill: #5c5c5c;
}

.legend-text {
  font: 13px "Liberation Serif", serif;
  fill: #555;
}

.domclick {
  position: absolute;
  left: 65px;
  bottom: 10px;
  display: flex;
  align-items: center;
  gap: 16px;
  color: #ececec;
  font: 800 55px Inter, sans-serif;
  filter: drop-shadow(0 0 1px #00000030);
}

.activation {
  position: absolute;
  right: 1px;
  bottom: 47px;
  color: #a9a9a9;
  white-space: nowrap;
}

.activation p {
  margin: 0;
}

.activation-title {
  font-size: 19px;
  line-height: 26px;
}

.activation-text {
  font-family: "Noto Sans", sans-serif;
  font-size: 14px;
  line-height: 20px;
}

/* scrollbar */
.scrollbar {
  display: flex;
  flex-direction: column;
  align-items: center;
  gap: 4px;
  width: 15px;
  padding: 6px 0 4px;
  box-sizing: border-box;
  background: #fbfbfb;
}

.track {
  display: flex;
  flex-direction: column;
  justify-content: flex-end;
  flex: 1;
  width: 9px;
}

.thumb {
  height: 6%;
  margin-bottom: 224px;
  border-radius: 4px;
  background: #8b8b8b;
}

/* sidebar */
.sidebar {
  display: flex;
  flex-direction: column;
  align-items: center;
  box-sizing: border-box;
  width: 56px;
  padding: 2px 0;
}

.sidebar button {
  width: 42px;
  height: 42px;
}

.sidebar .add {
  margin-top: 4px;
}

.sidebar-bottom {
  display: flex;
  flex-direction: column;
  align-items: center;
  width: 26px;
  margin-top: auto;
  padding-top: 2px;
  border-top: 1px solid #b0b0b0;
}

/* taskbar */
.taskbar {
  display: flex;
  height: 40px;
  background: linear-gradient(90deg, #474747 57%, #3f3a36 60%, #211f1f 63%, #1e1e1e 79%, #474747 83%);
  color: #fff;
}

.taskbar button {
  width: 48px;
}

.apps {
  display: flex;
  gap: 1px;
  margin-left: 8px;
}

.apps .alice {
  margin-right: 8px;
}

.apps button.running {
  background: linear-gradient(#76b9ed, #76b9ed) center bottom / 40px 2px no-repeat;
}

.apps button.running.focused {
  background: linear-gradient(#76b9ed, #76b9ed) center bottom / 48px 2px no-repeat #6c6c6c;
}

.yandex {
  width: 24px;
  border-radius: 12px;
  background: #fc3531;
  font: bold 17px/24px "Liberation Sans", sans-serif;
}

.chrome-profile {
  font: 9px "Open Sans", sans-serif;
  fill: #fff;
}

.tray {
  display: flex;
  align-items: center;
  gap: 9px;
  margin-left: auto;
  margin-right: 4px;
  border-right: 1px solid #777;
}

.lang {
  margin-left: 2px;
}

.clock {
  display: flex;
  flex-direction: column;
  align-items: center;
  margin-left: 4px;
  line-height: 18px;
  font-size: 11px;
}

.taskbar .notifications {
  position: relative;
  width: 34px;
  height: 40px;
  margin-right: 11px;
}

.badge {
  position: absolute;
  right: 1px;
  bottom: 5px;
  box-sizing: border-box;
  width: 16px;
  height: 16px;
  border: 1px solid #999;
  border-radius: 8px;
  background: #3b3b3b;
  font-size: 11px;
  line-height: 14px;
}
</style>
